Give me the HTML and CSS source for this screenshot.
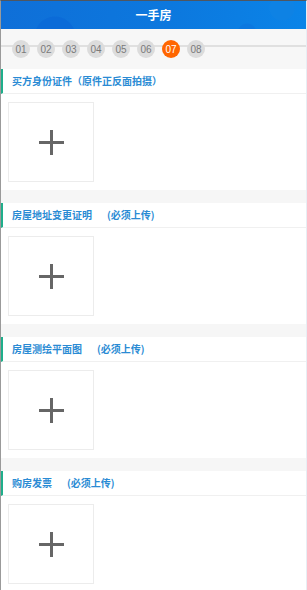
FILE: index.html
```html
<!DOCTYPE html>
<html lang="zh-CN">
<head>
<meta charset="utf-8">
<title>一手房</title>
<link rel="stylesheet" href="styles.css">
</head>
<body>
<div class="page">
  <header class="header">一手房</header>
  <div class="steps">
    <span class="step">01</span>
    <span class="step">02</span>
    <span class="step">03</span>
    <span class="step">04</span>
    <span class="step">05</span>
    <span class="step">06</span>
    <span class="step active">07</span>
    <span class="step">08</span>
  </div>

  <section class="section">
    <div class="title">买方身份证件（原件正反面拍摄）</div>
    <div class="body"><div class="upload"><span class="plus"></span></div></div>
  </section>

  <section class="section">
    <div class="title">房屋地址变更证明<span class="req">(必须上传)</span></div>
    <div class="body"><div class="upload"><span class="plus"></span></div></div>
  </section>

  <section class="section">
    <div class="title">房屋测绘平面图<span class="req">(必须上传)</span></div>
    <div class="body"><div class="upload"><span class="plus"></span></div></div>
  </section>

  <section class="section">
    <div class="title">购房发票<span class="req">(必须上传)</span></div>
    <div class="body"><div class="upload"><span class="plus"></span></div></div>
  </section>
</div>
</body>
</html>
```

FILE: styles.css
```css
* { box-sizing: border-box; }
html, body { margin: 0; padding: 0; }
body {
  width: 307px;
  height: 590px;
  overflow: hidden;
  background: #fff;
  font-family: "Noto Sans CJK SC", "Noto Sans", sans-serif;
}
.page {
  height: 590px;
  border-top: 1px solid #4f5660;
  border-left: 1px solid #9a9a9a;
  border-right: 1px solid #e8eef4;
  background: #f6f6f6;
  overflow: hidden;
}
.header {
  height: 28px;
  line-height: 28px;
  text-align: center;
  color: #fff;
  font-size: 12px;
  font-weight: bold;
  background:
    radial-gradient(circle at 54px 36px, #0b6bd8 0 20px, transparent 21px),
    radial-gradient(circle at 246px 32px, #0b78e0 0 9px, transparent 10px),
    radial-gradient(circle at 281px 7px, #0e82e4 0 12px, transparent 13px),
    linear-gradient(100deg, #0f6fd8 0%, #0c78de 55%, #0a84e8 100%);
}
.steps {
  height: 40px;
  display: flex;
  align-items: center;
  gap: 7px;
  padding-left: 11px;
  background:
    linear-gradient(#e0e0e0, #e0e0e0) 0 16px / 100% 2px no-repeat,
    #f7f7f7;
}
.step {
  width: 18px;
  height: 18px;
  border-radius: 50%;
  background: #dcdcdc;
  color: #7a7a7a;
  font-family: "Liberation Sans", Arial, sans-serif;
  font-size: 10px;
  display: flex;
  align-items: center;
  justify-content: center;
  flex: none;
}
.step.active {
  background: #ff6600;
  color: #fff;
}
.section {
  background: #fff;
  margin-bottom: 13px;
}
.title {
  height: 25px;
  line-height: 24px;
  border-left: 2px solid #1fae8b;
  border-bottom: 1px solid #f0f0f0;
  padding-left: 9px;
  color: #2a8bd4;
  font-size: 10px;
  font-weight: bold;
  white-space: nowrap;
}
.req { margin-left: 15px; }
.body {
  padding: 8px 7px;
}
.upload {
  width: 86px;
  height: 80px;
  border: 1px solid #ececec;
  background: #fff;
  display: flex;
  align-items: center;
  justify-content: center;
}
.plus {
  width: 25px;
  height: 25px;
  background:
    linear-gradient(#666, #666) center / 25px 3px no-repeat,
    linear-gradient(#666, #666) center / 3px 25px no-repeat;
}
```
